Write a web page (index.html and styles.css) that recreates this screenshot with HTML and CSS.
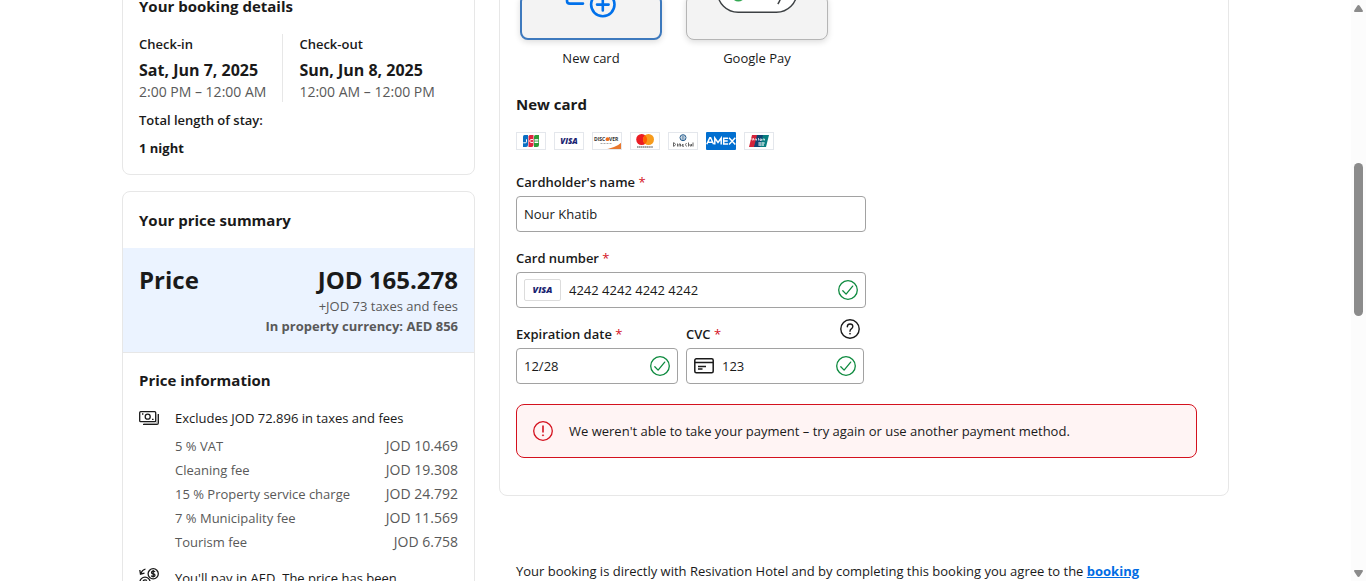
FILE: index.html
```html
<!DOCTYPE html>
<html lang="en">
<head>
<meta charset="utf-8">
<title>Complete your booking</title>
<link rel="stylesheet" href="styles.css">
</head>
<body>
<svg class="defs" aria-hidden="true">
  <symbol id="check" viewBox="0 0 20 20"><circle cx="10" cy="10" r="9.3" fill="none" stroke="#0d8a3e" stroke-width="1.3"/><path d="M4.8 10.8l3.3 3.3 6.6-8" fill="none" stroke="#0d8a3e" stroke-width="1.3" stroke-linecap="round" stroke-linejoin="round"/></symbol>
</svg>
<div class="viewport">
  <main class="page">
    <aside class="side">
      <section class="card details">
        <h2 class="title">Your booking details</h2>
        <div class="dates">
          <div class="date">
            <p class="medium">Check-in</p>
            <p class="day">Sat, Jun 7, 2025</p>
            <p class="muted figures">2:00 PM – 12:00 AM</p>
          </div>
          <div class="date">
            <p class="medium">Check-out</p>
            <p class="day">Sun, Jun 8, 2025</p>
            <p class="muted figures">12:00 AM – 12:00 PM</p>
          </div>
        </div>
        <p class="medium stay">Total length of stay:</p>
        <p class="strong stay">1 night</p>
      </section>

      <section class="card">
        <h2 class="title pad">Your price summary</h2>
        <div class="price">
          <div class="price-row"><span>Price</span><span>JOD 165.278</span></div>
          <p class="muted">+JOD 73 taxes and fees</p>
          <p class="muted strong">In property currency: AED 856</p>
        </div>
        <div class="info">
          <h2 class="title">Price information</h2>
          <div class="item">
            <svg class="icon" viewBox="0 0 20 20" fill="none" stroke="#1a1a1a" stroke-width="1.3">
              <rect x=".7" y="3.7" width="16" height="10" rx="1"/><circle cx="8.7" cy="8.7" r="2.5"/>
              <path d="M4 16.3h14q1.3 0 1.3-1.3V6M3 6h1.4M13 11.4h1.6" /><path d="M5 15.3h13V6.5" stroke="#999" stroke-width="1"/>
            </svg>
            <div class="item-body">
              <p>Excludes JOD 72.896 in taxes and fees</p>
              <dl class="fees">
                <div><dt>5 % VAT</dt><dd>JOD 10.469</dd></div>
                <div><dt>Cleaning fee</dt><dd>JOD 19.308</dd></div>
                <div><dt>15 % Property service charge</dt><dd>JOD 24.792</dd></div>
                <div><dt>7 % Municipality fee</dt><dd>JOD 11.569</dd></div>
                <div><dt>Tourism fee</dt><dd>JOD 6.758</dd></div>
              </dl>
            </div>
          </div>
          <div class="item">
            <svg class="icon" viewBox="0 0 20 20" fill="none" stroke="#1a1a1a" stroke-width="1.3">
              <circle cx="14.2" cy="5.8" r="5.1"/><path d="M16 4q-.6-.9-1.8-.9-1.7 0-1.7 1.3t1.7 1.4q1.8.1 1.8 1.4t-1.8 1.3q-1.4 0-2-.9M14.2 2v7.5M6.5 1Q3 2 1.8 5.5M.8 2l.7 4.2 4-1"/>
              <circle cx="6" cy="14.2" r="5.1"/><path d="M8 12.5q-2-1.4-3.6 0v3.5M3.5 14.3h3M13.5 19q3.5-1 4.7-4.5M19.2 18l-.7-4.2-4 1"/>
            </svg>
            <p class="item-body">You'll pay in AED. The price has been</p>
          </div>
        </div>
      </section>
    </aside>

    <div class="content">
      <section class="card payment">
        <div class="methods">
          <div class="method">
            <button class="tile selected" type="button" aria-labelledby="m-card">
              <svg viewBox="522 -4 138 42" fill="none" stroke="#0071eb" stroke-width="2.6"><path d="M567 -4v5q0 2.600 3 2.600h13" stroke-linecap="round"/><circle cx="602.8" cy="4.6" r="11.7"/><path d="M597 4.6h11.6M602.8 -1.200v11.600" stroke-linecap="round"/></svg>
            </button>
            <span id="m-card">New card</span>
          </div>
          <div class="method">
            <button class="tile" type="button" aria-labelledby="m-gpay">
              <svg viewBox="687 -5 140 44" fill="none"><rect x="717.5" y="-29" width="79.5" height="41.3" rx="20.6" fill="#fff" stroke="#3c4043" stroke-width="1.4"/><path d="M733 -3q5 6 11 0" stroke="#34a853" stroke-width="3"/><path d="M781.5 -4q-2 6-3.7 8" stroke="#3c4043" stroke-width="1.5"/></svg>
            </button>
            <span id="m-gpay">Google Pay</span>
          </div>
        </div>

        <h2 class="title">New card</h2>
        <div class="brands">
          <svg class="brand" viewBox="0 0 30 18" role="img" aria-label="JCB"><path d="M7 4.5Q7 3 8.500 3H12v10q0 2-2 2H7z" fill="#0a6fc2"/><path d="M12.500 4.500q0-1.500 1.500-1.500h3.500v10q0 2-2 2h-3z" fill="#df2440"/><path d="M18 4.500Q18 3 19.500 3H23v10q0 2-2 2h-3z" fill="#2c9c3a"/><path d="M10.500 7.300v2.500q0 1-1.200 1H7.200M17 7.600q-3.300-.7-3.300 1.400t3.300 1.400M18.500 7.700h3.800M18.500 9h3.800M18.500 10.500h3.800" fill="none" stroke="#fff"/></svg>
          <svg class="brand" viewBox="0 0 30 18" role="img" aria-label="Visa"><text x="15" y="12" text-anchor="middle" class="visa">VISA</text></svg>
          <svg class="brand" viewBox="0 0 30 18" role="img" aria-label="Discover"><path d="M10 18q14-2 20-8v8z" fill="#e8772e"/><text x="2" y="9" class="discover">DISC</text><circle cx="15.500" cy="7.200" r="1.900" fill="#ef6c1a"/><text x="17" y="9" class="discover">VER</text><path d="M8.500 11.500h12" stroke="#aaa" stroke-dasharray="2 1"/></svg>
          <svg class="brand" viewBox="0 0 30 18" role="img" aria-label="Mastercard"><circle cx="11.700" cy="7.500" r="5.500" fill="#eb1c23"/><circle cx="18.500" cy="7.500" r="5.500" fill="#f79c1c"/><path d="M15.100 3.200a5.500 5.500 0 0 1 0 8.600 5.500 5.500 0 0 1 0-8.600" fill="#ff5f00"/><path d="M7 15h16" stroke="#444" stroke-width="1.200" stroke-dasharray="1.500 .4"/></svg>
          <svg class="brand" viewBox="0 0 30 18" role="img" aria-label="Diners Club"><circle cx="15" cy="5.700" r="3" fill="#fff" stroke="#235b8c" stroke-width="1"/><path d="M14.200 3.500v4.400M15.900 3.500v4.400" stroke="#235b8c" stroke-width=".8"/><path d="M5.500 10.500v4M6 10.500q3 2 0 4M9.500 11.500v3M11 14.500v-2.500h1.500v2.500M14 13h1.500q-.7-1.500-1.500 0t2 1.300M18.500 11q-2 1.500 0 3.500M20.500 10.500v4M22 12v2h1.500v-2M25 10.500v4" fill="none" stroke="#555" stroke-width=".9"/></svg>
          <svg class="brand amex" viewBox="0 0 30 18" role="img" aria-label="American Express"><path d="M.8 12.300 3.800 5.700h.8l3 6.600M2 10.300h4.400M8.800 12.500V6l3.200 4.500L15.200 6v6.500M22 6.200h-4.300v5.700H22M18 9h3.700M23 5.800l6.300 6.600M29.300 5.800 23 12.400" fill="none" stroke="#fff" stroke-width="1.500"/></svg>
          <svg class="brand" viewBox="0 0 30 18" role="img" aria-label="UnionPay"><path d="M8 3h6l-3 12H5z" fill="#d5233a"/><path d="M13 3h7l-3 12h-7z" fill="#0f4473"/><path d="M19 3h6l-3 12h-6z" fill="#087d80"/><path d="M8 6v2h1.500V6M11 8.500V7h1.500v1.500M14.500 6v2.500M16 8.500h1.500V7H16zM19 8.500V7h1.500v1.500M14 11h7M14 13h6M16 10v4M19 10v4" fill="none" stroke="#fff" stroke-width=".7"/></svg>
        </div>

        <form class="form">
          <div class="field">
            <label for="name">Cardholder's name <span class="req">*</span></label>
            <div class="control"><input id="name" type="text" value="Nour Khatib"></div>
          </div>
          <div class="field">
            <label for="number">Card number <span class="req">*</span></label>
            <div class="control">
              <svg class="chip" viewBox="0 0 36 22" aria-hidden="true"><text x="18" y="14" text-anchor="middle" class="visa large">VISA</text></svg>
              <input id="number" type="text" value="4242 4242 4242 4242">
              <svg class="icon"><use href="#check"/></svg>
            </div>
          </div>
          <div class="pair">
            <div class="field expiry">
              <label for="expiry">Expiration date <span class="req">*</span></label>
              <div class="control"><input id="expiry" type="text" value="12/28"><svg class="icon"><use href="#check"/></svg></div>
            </div>
            <div class="field cvc">
              <div class="label-row">
                <label for="cvc">CVC <span class="req">*</span></label>
                <button class="help" type="button" aria-label="What is a CVC?">
                  <svg class="icon" viewBox="0 0 20 20" fill="none" stroke="#1a1a1a" stroke-width="1.4"><circle cx="10" cy="10" r="9.2"/><path d="M7.300 7.700q.1-2.700 2.800-2.700t2.700 2.500q0 1.300-1.500 2.300-1.300.8-1.300 2.400" stroke-linecap="round"/><circle cx="10" cy="14.700" r=".5" fill="#1a1a1a" stroke-width=".8"/></svg>
                </button>
              </div>
              <div class="control">
                <svg class="icon" viewBox="0 0 20 20" fill="none" stroke="#1a1a1a" stroke-width="1.500"><rect x=".8" y="2.800" width="18.400" height="14" rx="1.500"/><path d="M1 6.500h18M4 10.500h8M4 13h4.500"/></svg>
                <input id="cvc" type="text" value="123">
                <svg class="icon"><use href="#check"/></svg>
              </div>
            </div>
          </div>
        </form>

        <div class="alert" role="alert">
          <svg class="icon" viewBox="0 0 20 20" fill="none" stroke="#d4111e" stroke-width="1.300"><circle cx="10" cy="10" r="9.300"/><path d="M10 4.500v7" stroke-width="1.600"/><circle cx="10" cy="14.300" r=".6" fill="#d4111e" stroke-width=".8"/></svg>
          <p>We weren't able to take your payment – try again or use another payment method.</p>
        </div>
      </section>
      <p class="terms">Your booking is directly with Resivation Hotel and by completing this booking you agree to the <a href="#terms">booking</a></p>
    </div>
  </main>

  <div class="scrollbar" aria-hidden="true">
    <svg class="arrow" viewBox="0 0 9 8"><path d="M4.500 0q.8 0 1.200.7L8.800 5.500Q9.400 7 8 7H1Q-.4 7 .2 5.500L3.300.7Q3.700 0 4.500 0" fill="#8b8b8b"/></svg>
    <div class="track"><div class="thumb"></div></div>
    <svg class="arrow" viewBox="0 0 9 8"><path d="M4.500 8q.8 0 1.200-.7l3.100-4.800Q9.400 1 8 1H1Q-.4 1 .2 2.500l3.100 4.800Q3.700 8 4.500 8" fill="#8b8b8b"/></svg>
  </div>
</div>
</body>
</html>
```

FILE: styles.css
```css
* { box-sizing: border-box; }

body {
  margin: 0;
  background: #fff;
  color: #1a1a1a;
  font: 13px/20px "Segoe UI", "Open Sans", "Noto Sans", sans-serif;
}

p, h2, dl, dd { margin: 0; }

.defs { display: none; }

.viewport {
  display: flex;
  height: 100vh;
  overflow: hidden;
}

.page {
  flex: 1;
  display: grid;
  grid-template-columns: 353fr 730fr;
  gap: 24px;
  align-items: start;
  max-width: 1107px;
  margin: -23px auto 0;
  white-space: nowrap;
}

.side {
  display: grid;
  gap: 16px;
}

.card {
  border: 1px solid #e7e7e7;
  border-radius: 8px;
  background: #fff;
  overflow: hidden;
}

.title {
  font-size: 15px;
  line-height: 24px;
  font-weight: 700;
}

.medium { font-weight: 600; }
.strong { font-weight: 700; }
.muted { color: #595959; }
.figures { font-size: 14px; }

.details { padding: 16px; }

.dates {
  display: flex;
  gap: 16px;
  margin-top: 16px;
}

.date + .date {
  border-left: 1px solid #e7e7e7;
  padding-left: 16px;
}

.day {
  margin-top: 4px;
  font-size: 16px;
  line-height: 24px;
  font-weight: 700;
}

.stay { margin-top: 8px; }

.pad { padding: 16px; }

.price {
  padding: 16px;
  background: #ebf3ff;
  border-bottom: 1px solid #e7e7e7;
  text-align: right;
}

.price-row {
  display: flex;
  justify-content: space-between;
  font-size: 24px;
  line-height: 32px;
  font-weight: 700;
}

.info {
  display: grid;
  gap: 16px;
  padding: 15px 16px 16px;
}

.item {
  display: flex;
  gap: 16px;
}

.icon {
  flex: none;
  display: block;
  width: 20px;
  height: 20px;
}

.item-body { flex: 1; }

.fees {
  display: grid;
  gap: 4px;
  margin-top: 8px;
  color: #595959;
}

.fees div {
  display: flex;
  justify-content: space-between;
}

.fees dd { font-size: 14px; }

.payment { padding: 16px 31px 37px 16px; }

.methods {
  display: flex;
  gap: 24px;
  padding: 0 4px;
  margin-bottom: 24px;
}

.method {
  display: grid;
  gap: 8px;
  width: 142px;
  text-align: center;
}

.tile {
  height: 46px;
  padding: 0;
  border: 1px solid #b5b5b5;
  border-radius: 8px;
  background: #f3f3f3;
  box-shadow: 0 2px 6px rgba(0, 0, 0, 0.14);
}

.tile.selected { border: 2px solid #3d79bd; }

.tile svg {
  display: block;
  width: 100%;
  height: 100%;
}

.brands {
  display: flex;
  gap: 8px;
  margin: 16px 0 22px;
}

.brand {
  width: 30px;
  height: 18px;
  outline: 1px solid #e4e7ec;
  outline-offset: -1px;
}

.amex {
  background: #016fd0;
  border-radius: 1px;
  outline: none;
}

.visa {
  font: italic 800 8px "Open Sans", sans-serif;
  fill: #1a1f71;
}

.large { font-size: 10px; }

.discover {
  font: 700 5px "Open Sans", sans-serif;
  fill: #333;
}

.form {
  display: grid;
  gap: 16px;
}

.field {
  display: grid;
  grid-template-columns: minmax(0, 1fr);
  gap: 4px;
  max-width: 350px;
}

label { font-weight: 600; }

.req {
  color: #d4111e;
  font-weight: 400;
}

.control {
  display: flex;
  align-items: center;
  gap: 8px;
  height: 36px;
  padding: 0 7px;
  border: 1px solid #a2a2a2;
  border-radius: 4px;
  background: #fff;
}

.control input {
  flex: 1;
  min-width: 0;
  padding: 0;
  border: 0;
  outline: 0;
  background: none;
  color: inherit;
  font: inherit;
}

.chip {
  flex: none;
  width: 37px;
  height: 22px;
  border: 1px solid #dcdcdc;
  border-radius: 2px;
}

.pair {
  display: flex;
  align-items: flex-end;
  gap: 8px;
  margin-top: -5px;
}

.expiry { width: 162px; }
.cvc { width: 178px; }

.label-row {
  display: flex;
  align-items: flex-end;
  justify-content: space-between;
  height: 25px;
  padding-right: 4px;
}

.help {
  align-self: flex-start;
  padding: 0;
  border: 0;
  background: none;
}

.alert {
  display: flex;
  align-items: center;
  gap: 16px;
  margin-top: 20px;
  padding: 16px;
  border: 1px solid #d4111e;
  border-radius: 8px;
  background: #fff4f4;
}

.terms { padding: 65px 17px 0; }

.terms a {
  color: #006ce4;
  font-weight: 700;
}

.scrollbar {
  flex: none;
  display: flex;
  flex-direction: column;
  align-items: center;
  gap: 5px;
  width: 15px;
  padding: 5px 0 4px;
  background: #fcfcfc;
}

.arrow {
  width: 9px;
  height: 8px;
}

.track {
  flex: 1;
  width: 9px;
  padding-top: 145px;
}

.thumb {
  height: 153px;
  border-radius: 5px;
  background: #8b8b8b;
}
```
